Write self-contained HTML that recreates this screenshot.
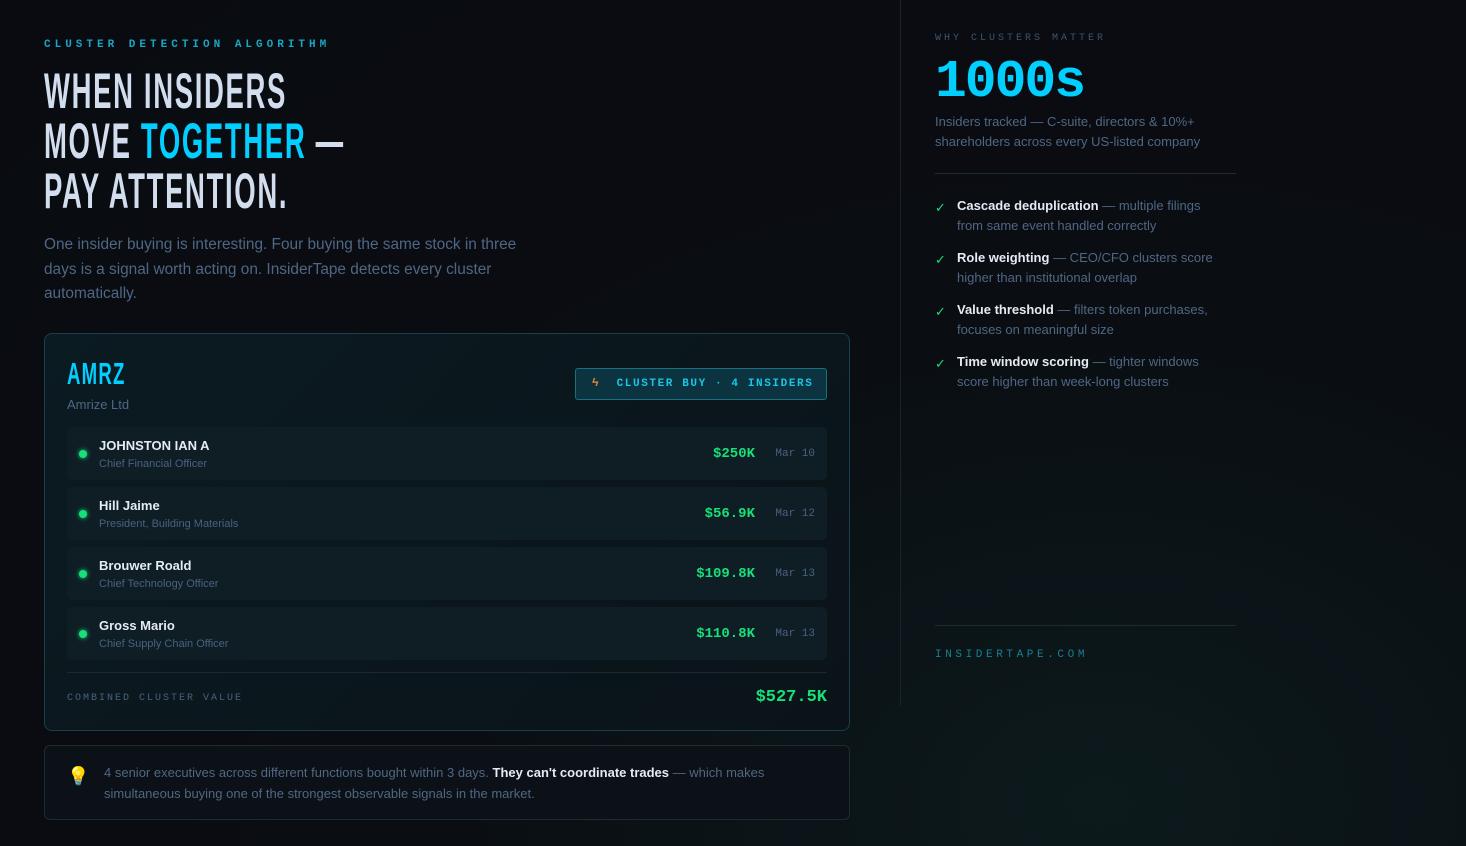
<!DOCTYPE html>
<html><head><meta charset="utf-8"><style>
*{margin:0;padding:0;box-sizing:border-box}
body{width:1466px;height:846px;overflow:hidden;background:radial-gradient(ellipse at 75% 95%,#0c1a1c 0%,#0a0d12 45%,#090b10 100%);font-family:"Liberation Sans",sans-serif;color:#d4dceb;position:relative}
.mono{font-family:"Liberation Mono",monospace}
.abs{position:absolute}
.eyebrow{left:44px;top:39px;font-size:11px;letter-spacing:4px;color:#1aa6c4;font-weight:bold}
h1{position:absolute;left:44px;top:66px;font-family:"Liberation Sans",sans-serif;font-weight:bold;font-size:50px;line-height:50px;color:#d2ddee;letter-spacing:3px;transform:scaleX(0.55);transform-origin:left top;white-space:nowrap}
h1 .c{color:#00cfff}
.lead{left:44px;top:233px;width:500px;font-size:15.4px;line-height:24.5px;color:#4f6784}
.card{left:44px;top:333px;width:806px;height:398px;border:1px solid #17404a;border-radius:8px;background:linear-gradient(135deg,#0b1b22,#0a1318)}
.tick{left:22px;top:22px;font-weight:bold;font-size:31px;color:#00cfff;letter-spacing:2px;transform:scaleX(.6);transform-origin:left top}
.co{left:22px;top:63px;font-size:13px;color:#4f6784}
.badge{left:530px;top:34px;width:252px;height:32px;border:1px solid #1a6e80;border-radius:3px;background:#0b3440;color:#1ec4e6;font-size:11px;letter-spacing:1.6px;font-weight:bold;line-height:30px;padding-left:16px;white-space:nowrap}
.row{left:22px;width:760px;height:53px;background:#0f1e25;border-radius:5px}
.dot{left:12px;top:23px;width:8px;height:8px;border-radius:50%;background:#16e07a;box-shadow:0 0 5px #16e07a}
.nm{left:32px;top:11px;font-size:13px;font-weight:bold;color:#e4ebf5}
.rl{left:32px;top:31px;font-size:11px;color:#4a6080}
.amt{right:72px;top:19px;font-size:14px;font-weight:bold;color:#16e07a}
.dt{right:12px;top:21px;font-size:11px;color:#4a6080}
.sep{left:22px;top:338px;width:760px;height:1px;background:#1a2a33}
.cv{left:22px;top:359px;font-size:10px;letter-spacing:2px;color:#4a6080}
.tot{right:22px;top:354px;font-size:17px;font-weight:bold;color:#16e07a}
.note{left:44px;top:745px;width:806px;height:75px;border:1px solid #1e2a36;border-radius:6px;background:#0c1017}
.vline{left:900px;top:0;width:1px;height:706px;background:#1a222c}
.r{left:935px}
</style></head><body>
<div class="abs eyebrow mono">CLUSTER DETECTION ALGORITHM</div>
<h1>WHEN INSIDERS<br>MOVE <span class="c">TOGETHER</span> —<br>PAY ATTENTION.</h1>
<div class="abs lead">One insider buying is interesting. Four buying the same stock in three days is a signal worth acting on. InsiderTape detects every cluster automatically.</div>
<div class="abs card">
 <div class="abs tick">AMRZ</div>
 <div class="abs co">Amrize Ltd</div>
 <div class="abs badge mono"><span style="color:#ff8a3d">ϟ</span>&nbsp; CLUSTER BUY · 4 INSIDERS</div>
 <div class="abs row" style="top:93px"><div class="abs dot"></div><div class="abs nm">JOHNSTON IAN A</div><div class="abs rl">Chief Financial Officer</div><div class="abs amt mono">$250K</div><div class="abs dt mono">Mar 10</div></div>
 <div class="abs row" style="top:153px"><div class="abs dot"></div><div class="abs nm">Hill Jaime</div><div class="abs rl">President, Building Materials</div><div class="abs amt mono">$56.9K</div><div class="abs dt mono">Mar 12</div></div>
 <div class="abs row" style="top:213px"><div class="abs dot"></div><div class="abs nm">Brouwer Roald</div><div class="abs rl">Chief Technology Officer</div><div class="abs amt mono">$109.8K</div><div class="abs dt mono">Mar 13</div></div>
 <div class="abs row" style="top:273px"><div class="abs dot"></div><div class="abs nm">Gross Mario</div><div class="abs rl">Chief Supply Chain Officer</div><div class="abs amt mono">$110.8K</div><div class="abs dt mono">Mar 13</div></div>
 <div class="abs sep"></div>
 <div class="abs cv mono">COMBINED CLUSTER VALUE</div>
 <div class="abs tot mono">$527.5K</div>
</div>
<div class="abs note">
 <div class="abs" style="left:22px;top:20px;font-size:18px">💡</div>
 <div class="abs" style="left:59px;top:16px;width:720px;font-size:13px;line-height:21px;color:#4f6784">4 senior executives across different functions bought within 3 days. <b style="color:#e4ebf5">They can't coordinate trades</b> — which makes simultaneous buying one of the strongest observable signals in the market.</div>
</div>
<div class="abs vline"></div>
<div class="abs r mono" style="top:33px;font-size:10px;letter-spacing:3px;color:#3f5470">WHY CLUSTERS MATTER</div>
<div class="abs r mono" style="top:52px;font-size:53px;font-weight:bold;color:#00cfff;letter-spacing:-2px">1000s</div>
<div class="abs r" style="top:112px;width:290px;font-size:13px;line-height:20px;color:#4f6784">Insiders tracked — C-suite, directors &amp; 10%+ shareholders across every US-listed company</div>
<div class="abs r" style="top:173px;width:301px;height:1px;background:#1f2a36"></div>
<div class="abs r" style="top:196px;width:290px;font-size:13px;line-height:20px;color:#4f6784">
 <div style="position:relative;padding-left:22px;margin-bottom:12px"><span style="position:absolute;left:0;top:2px;color:#16e07a">✓</span><b style="color:#e4ebf5">Cascade deduplication</b> — multiple filings from same event handled correctly</div>
 <div style="position:relative;padding-left:22px;margin-bottom:12px"><span style="position:absolute;left:0;top:2px;color:#16e07a">✓</span><b style="color:#e4ebf5">Role weighting</b> — CEO/CFO clusters score higher than institutional overlap</div>
 <div style="position:relative;padding-left:22px;margin-bottom:12px"><span style="position:absolute;left:0;top:2px;color:#16e07a">✓</span><b style="color:#e4ebf5">Value threshold</b> — filters token purchases, focuses on meaningful size</div>
 <div style="position:relative;padding-left:22px"><span style="position:absolute;left:0;top:2px;color:#16e07a">✓</span><b style="color:#e4ebf5">Time window scoring</b> — tighter windows score higher than week-long clusters</div>
</div>
<div class="abs r" style="top:625px;width:301px;height:1px;background:#1f2a36"></div>
<div class="abs r mono" style="top:649px;font-size:11px;letter-spacing:3.6px;color:#1a7f96">INSIDERTAPE.COM</div>
</body></html>
